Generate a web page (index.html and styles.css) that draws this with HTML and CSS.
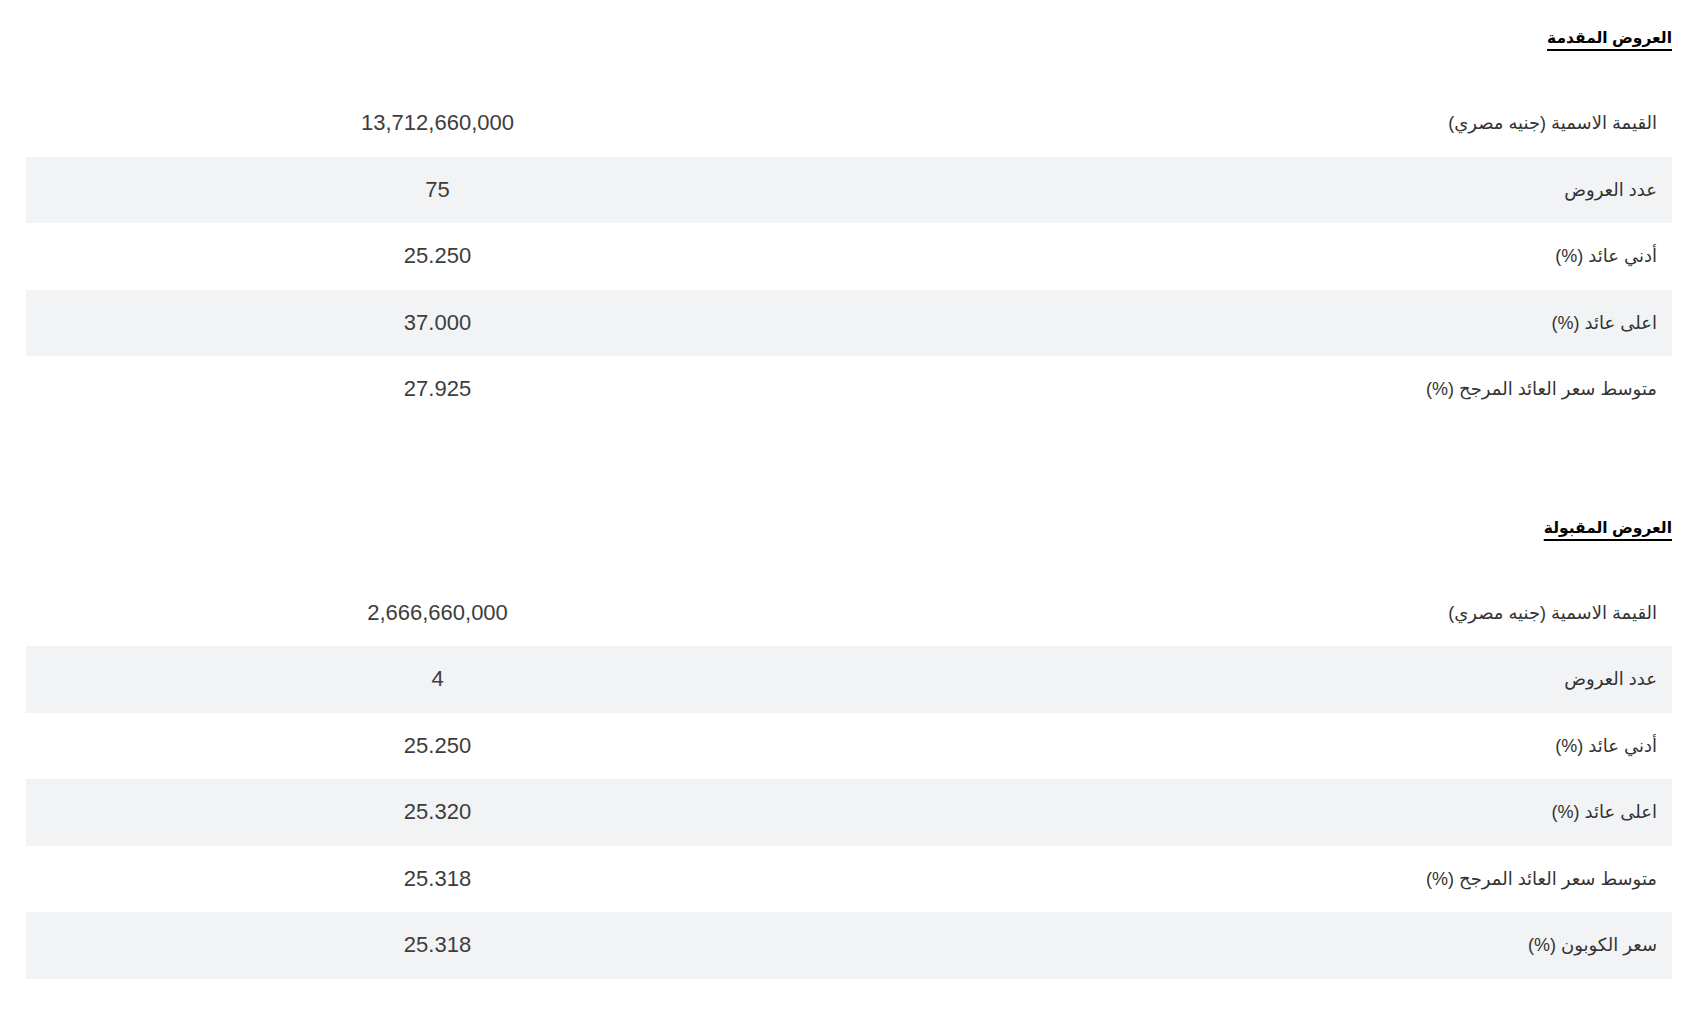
FILE: index.html
```html
<!DOCTYPE html>
<html lang="ar" dir="rtl">
<head>
<meta charset="utf-8">
<title>نتائج العطاء</title>
<link rel="stylesheet" href="styles.css">
</head>
<body>
<main class="page">
  <section class="block block-first">
    <h2 class="title">العروض المقدمة</h2>
    <table class="stats">
      <tr><td class="label">القيمة الاسمية (جنيه مصري)</td><td class="value">13,712,660,000</td></tr>
      <tr class="alt"><td class="label">عدد العروض</td><td class="value">75</td></tr>
      <tr><td class="label">أدني عائد (%)</td><td class="value">25.250</td></tr>
      <tr class="alt"><td class="label">اعلى عائد (%)</td><td class="value">37.000</td></tr>
      <tr><td class="label">متوسط سعر العائد المرجح (%)</td><td class="value">27.925</td></tr>
    </table>
  </section>
  <section class="block block-second">
    <h2 class="title">العروض المقبولة</h2>
    <table class="stats">
      <tr><td class="label">القيمة الاسمية (جنيه مصري)</td><td class="value">2,666,660,000</td></tr>
      <tr class="alt"><td class="label">عدد العروض</td><td class="value">4</td></tr>
      <tr><td class="label">أدني عائد (%)</td><td class="value">25.250</td></tr>
      <tr class="alt"><td class="label">اعلى عائد (%)</td><td class="value">25.320</td></tr>
      <tr><td class="label">متوسط سعر العائد المرجح (%)</td><td class="value">25.318</td></tr>
      <tr class="alt"><td class="label">سعر الكوبون (%)</td><td class="value">25.318</td></tr>
    </table>
  </section>
</main>
</body>
</html>
```
FILE: styles.css
```css
html, body {
  margin: 0;
  padding: 0;
  background: #ffffff;
}
body {
  font-family: "Liberation Sans", "DejaVu Sans", Arial, sans-serif;
  color: #3d3d3d;
}
.page {
  padding: 0 27px 0 26px;
}
.block-first {
  padding-top: 26px;
}
.block-second {
  padding-top: 93px;
}
.title {
  margin: 0;
  font-size: 15.5px;
  font-weight: bold;
  color: #000;
  text-decoration: underline;
  text-decoration-thickness: 2px;
  text-underline-offset: 6px;
  line-height: 24px;
  height: 24px;
}
.stats {
  width: 100%;
  margin-top: 40px;
  border-collapse: collapse;
  table-layout: fixed;
}
.stats td {
  height: 66.5px;
  padding: 0;
  vertical-align: middle;
}
.stats .alt td {
  background: #f2f3f5;
}
.stats .label {
  width: calc(50% - 15px);
  text-align: right;
  padding-right: 15px;
  font-size: 18px;
  color: #333;
}
.stats .value {
  text-align: center;
  font-size: 22px;
  color: #3d3d3d;
}
```
